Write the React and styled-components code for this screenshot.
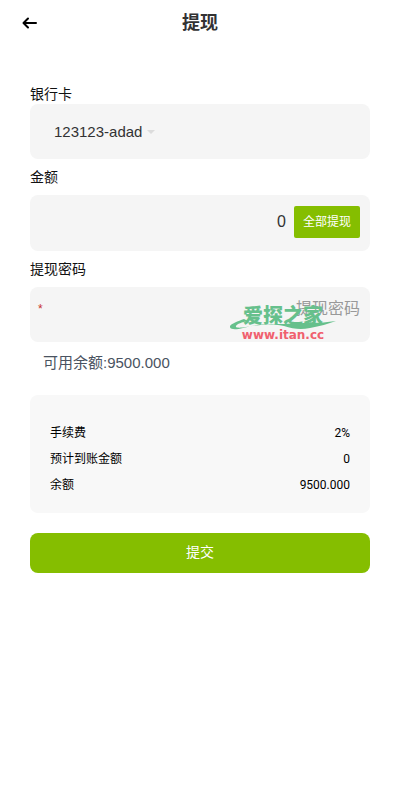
import React, { useState } from "react";
import styled, { createGlobalStyle } from "styled-components";

const GlobalStyle = createGlobalStyle`
  * {
    box-sizing: border-box;
  }

  body {
    margin: 0;
    background: #fff;
    color: #111;
    font-family: "Liberation Sans", "Noto Sans CJK SC", sans-serif;
    font-size: 14px;
  }

  button, input, select {
    font-family: inherit;
    margin: 0;
    border: none;
    outline: none;
  }
`;

const Header = styled.header`
  display: grid;
  grid-template-columns: 60px 1fr 60px;
  align-items: center;
  height: 46px;
`;

const Title = styled.h1`
  margin: 0;
  text-align: center;
  font-size: 18px;
  line-height: 24px;
  font-weight: 700;
  color: #323233;
`;

const BackButton = styled.button`
  display: flex;
  justify-content: center;
  padding: 0;
  background: none;
  cursor: pointer;
`;

const Form = styled.form`
  display: flex;
  flex-direction: column;
  padding: 38px 30px 30px;
`;

const Label = styled.label`
  font-size: 14px;
  line-height: ${(props) => (props.$compact ? "20px" : "36px")};
`;

const Field = styled.div`
  position: relative;
  display: flex;
  align-items: ${(props) => props.$align || "center"};
  min-height: 55px;
  padding: ${(props) => props.$padding || "0"};
  background: #f5f5f5;
  border-radius: 8px;
`;

const BankSelect = styled.select`
  appearance: none;
  padding: 0;
  background: transparent;
  color: #323233;
  font-size: 15px;
  line-height: 24px;
  cursor: pointer;
`;

const Caret = styled.svg`
  margin-left: 4px;
`;

const TextInput = styled.input`
  flex: 1;
  min-width: 0;
  height: 24px;
  padding: 0;
  background: transparent;
  color: #323233;
  text-align: right;
  font-size: 16px;
  line-height: 24px;

  &::placeholder {
    color: #999;
    opacity: 1;
  }
`;

const AllButton = styled.button`
  height: 32px;
  margin-left: 8px;
  padding: 0 9px 4px;
  border-radius: 2px;
  background: #85be00;
  color: #fff;
  font-size: 12px;
  cursor: pointer;
`;

const Required = styled.span`
  color: #c8322b;
  font-size: 12px;
  line-height: 24px;
`;

const Available = styled.p`
  margin: 0 13px 11px;
  color: #4a5361;
  font-size: 15px;
  line-height: 42px;
`;

const Summary = styled.dl`
  margin: 0 0 20px;
  padding: 25px 20px 15px;
  background: #f8f8f8;
  border-radius: 8px;
`;

const SummaryRow = styled.div`
  display: flex;
  justify-content: space-between;
  color: #000;
  font-family: Roboto, "Noto Sans CJK SC", sans-serif;
  font-size: 12px;
  line-height: 26px;

  dd {
    margin: 0;
  }
`;

const SubmitButton = styled.button`
  height: 40px;
  padding: 0 0 4px;
  border-radius: 8px;
  background: #85be00;
  color: #fff;
  font-size: 14px;
  cursor: pointer;
`;

const Watermark = styled.div`
  position: absolute;
  right: 34px;
  bottom: 0;
  display: flex;
  flex-direction: column;
  align-items: center;
  width: 106px;
  pointer-events: none;
`;

const WatermarkName = styled.span`
  color: #66c08c;
  font-size: 20px;
  font-weight: 900;
  line-height: 24px;
`;

const WatermarkSite = styled.span`
  color: #f0606e;
  font-family: "DejaVu Sans", sans-serif;
  font-size: 12px;
  font-weight: 700;
  line-height: 14px;
`;

const Swoosh = styled.svg`
  position: absolute;
  left: 0;
  top: 13px;
`;

const balance = "9500.000";

const App = () => {
  const [card, setCard] = useState("123123-adad");
  const [amount, setAmount] = useState("0");
  const [password, setPassword] = useState("");

  const rows = [
    { name: "手续费", value: "2%" },
    { name: "预计到账金额", value: amount || "0" },
    { name: "余额", value: balance },
  ];

  return (
    <>
      <GlobalStyle />
      <Header>
        <BackButton type="button" aria-label="返回">
          <svg width="16" height="14" viewBox="0 0 16 14" fill="none" stroke="#000" strokeWidth="2" strokeLinecap="round" strokeLinejoin="round">
            <path d="M6 2.5L1.5 7L6 11.5M2 7H14" />
          </svg>
        </BackButton>
        <Title>提现</Title>
      </Header>

      <Form onSubmit={(e) => e.preventDefault()}>
        <Label htmlFor="card" $compact>银行卡</Label>
        <Field $padding="0 24px">
          <BankSelect id="card" value={card} onChange={(e) => setCard(e.target.value)}>
            <option value="123123-adad">123123-adad</option>
          </BankSelect>
          <Caret width="8" height="4" viewBox="0 0 8 4">
            <path d="M0 0h8L4 4z" fill="#dcdcdc" />
          </Caret>
        </Field>

        <Label htmlFor="amount">金额</Label>
        <Field $padding="11px 10px 13px">
          <TextInput id="amount" inputMode="decimal" value={amount} onChange={(e) => setAmount(e.target.value)} />
          <AllButton type="button" onClick={() => setAmount(balance)}>全部提现</AllButton>
        </Field>

        <Label htmlFor="password">提现密码</Label>
        <Field $align="flex-start" $padding="10px 10px 10px 8px">
          <Required>*</Required>
          <TextInput
            id="password"
            type="password"
            placeholder="提现密码"
            value={password}
            onChange={(e) => setPassword(e.target.value)}
          />
          <Watermark>
            <WatermarkName>爱探之家</WatermarkName>
            <Swoosh width="106" height="14" viewBox="0 0 106 14" fill="#66c08c">
              <path d="M14 2C8 4 1 7 0 9c-1 4 6 4 13 2 14-4 27-5 41-2 9 3 17 4 26 2 10-2 18-4 26-7-9 1-16 2-25 2-10 0-17 0-27 1-15 0-27 1-38 3-6 1-11 1-10-1 1-2 6-4 12-5z" />
            </Swoosh>
            <WatermarkSite>www.itan.cc</WatermarkSite>
          </Watermark>
        </Field>

        <Available>可用余额:{balance}</Available>

        <Summary>
          {rows.map((row) => (
            <SummaryRow key={row.name}>
              <dt>{row.name}</dt>
              <dd>{row.value}</dd>
            </SummaryRow>
          ))}
        </Summary>

        <SubmitButton type="submit">提交</SubmitButton>
      </Form>
    </>
  );
};

export default App;
